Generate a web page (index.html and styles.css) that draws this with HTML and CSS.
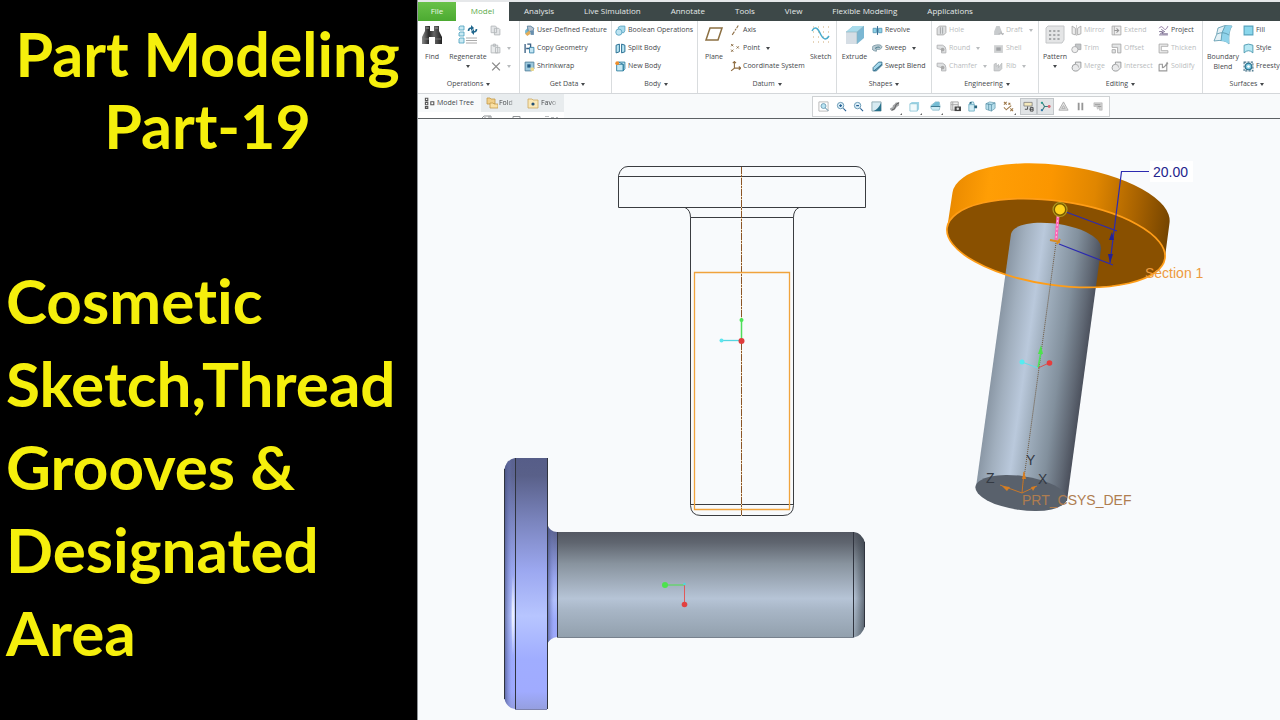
FILE: index.html
```
<!DOCTYPE html>
<html lang="en">
<head>
<meta charset="utf-8">
<title>Part Modeling Part-19</title>
<link rel="stylesheet" href="styles.css">
</head>
<body>
<svg class="defs" aria-hidden="true">
  <symbol id="copy" viewBox="0 0 10 10"><path d="M1 1h4l1 1v5H1zM4 3h4l1 1v5H4z" fill="#e4e6e8" stroke="#b4b8bb" stroke-width=".8"/></symbol>
  <symbol id="paste" viewBox="0 0 10 10"><path d="M1 2h6v7H1zM3 1h2v2H3zM5 4h4v5H5z" fill="#e9ebec" stroke="#b4b8bb" stroke-width=".8"/></symbol>
  <symbol id="cross" viewBox="0 0 10 10"><path d="M2 1.500l7 7M9 1.500l-7 7" stroke="#888" stroke-width="1.200"/></symbol>
  <symbol id="udf" viewBox="0 0 10 10"><path d="M1 5l2-2h3v5H1z" fill="#77b9d2"/><path d="M3 1h3l3 2-1 3H4z" fill="#b7c3d0" stroke="#4a7796" stroke-width=".7"/><path d="M1 8l4-3 1 3-3 2z" fill="#e3ad59"/><path d="M6 5h3v4H6z" fill="#688fae"/></symbol>
  <symbol id="geom" viewBox="0 0 10 10"><path d="M1 1v8M3 1h3v4H2" fill="none" stroke="#385e82" stroke-width="1.200"/><path d="M5 4h4v5H5z" fill="#c3e5f3" stroke="#3984a8" stroke-width=".8"/></symbol>
  <symbol id="shrink" viewBox="0 0 10 10"><path d="M1 1h8v6L7 9H1z" fill="#9cc8dc" stroke="#537f9a" stroke-width=".8"/><path d="M3 3h3v3H3z" fill="#245b83"/><path d="M6 6h3v3H6z" fill="#efd98a"/></symbol>
  <symbol id="boolean" viewBox="0 0 10 10"><path d="M3 2l2-1h4v4L8 7H3z" fill="#a9dbed" stroke="#5aa4c2" stroke-width=".8"/><circle cx="3.500" cy="6.500" r="2.800" fill="#bde4f2" stroke="#5aa4c2" stroke-width=".8"/></symbol>
  <symbol id="split" viewBox="0 0 10 10"><path d="M1 2l3-1v7l-3 1zM6 1l3 1v6l-3 1z" fill="#b9e6f3" stroke="#286e92" stroke-width=".9"/></symbol>
  <symbol id="newbody" viewBox="0 0 10 10"><path d="M1.500 3h6v6h-6zM3 1h6v6L7.500 9V3z" fill="#c5e9f4" stroke="#2c7c9e" stroke-width=".8"/><circle cx="2" cy="2" r="1.700" fill="#ef8e2b"/></symbol>
  <symbol id="axis" viewBox="0 0 10 10"><path d="M2 9l2-3M4.500 5l1-1.500M6 3l1.500-2.500" stroke="#8f7048" stroke-width="1"/></symbol>
  <symbol id="point" viewBox="0 0 10 10"><path d="M1 1l2 2M3 1L1 3M6 3l2 2M8 3L6 5M1 6l2 2M3 6L1 8" stroke="#8f7048" stroke-width=".9"/></symbol>
  <symbol id="csys" viewBox="0 0 10 10"><path d="M4 .500v6L1 9M4 6.500h6M2.500 2L4 .500 5.500 2M8 5l2 1.500L8 8" fill="none" stroke="#8f6d42" stroke-width="1"/></symbol>
  <symbol id="revolve" viewBox="0 0 10 10"><path d="M1 3h3v4H1zM6 3h3v4H6z" fill="#8ed1e7" stroke="#5a9bb8" stroke-width=".8"/><path d="M5 1v8" stroke="#386e94"/></symbol>
  <symbol id="sweep" viewBox="0 0 10 10"><path d="M0 4.500c0-3 9-4 9-1 0 2-3 3-5 2v2C1 7 0 6 0 4.500z" fill="#b9cbd3" stroke="#7d9aa6" stroke-width=".8"/><path d="M3 5c2-2 4-1 4-1" fill="none" stroke="#4b7b8c"/></symbol>
  <symbol id="blend" viewBox="0 0 10 10"><path d="M1 6L6 1h3v3L4 9H1z" fill="#a4d9ed" stroke="#326b87" stroke-width=".8"/><path d="M2 9L9 3" stroke="#326b87"/></symbol>
  <symbol id="hole" viewBox="0 0 10 10"><path d="M1 3l2-2h6v6L7 9H1z" fill="#dfe1e2" stroke="#aaa" stroke-width=".8"/><path d="M4 2v6M6 2v6" stroke="#a8abad"/></symbol>
  <symbol id="round" viewBox="0 0 10 10"><path d="M1 2h5q3 1 3 4v3H5V6L1 5z" fill="#dfe1e2" stroke="#b0b2b4" stroke-width=".8"/><circle cx="6" cy="6" r="1.700" fill="#aaa"/></symbol>
  <symbol id="shell" viewBox="0 0 10 10"><path d="M1 2h8v7H1z" fill="#cfd1d2"/><path d="M3 4h4v3H3z" fill="#9fa2a5"/></symbol>
  <symbol id="draft" viewBox="0 0 10 10"><path d="M3 1h3l2 5-2 3H1V6z" fill="#c8cbcd"/><path d="M5 8h5M7 6l2 3" stroke="#b5b7b9"/></symbol>
  <symbol id="rib" viewBox="0 0 10 10"><path d="M1 3l2-1v3l2-2v3l3-4v5L6 9H1z" fill="#d0d2d4" stroke="#b5b7b9" stroke-width=".7"/></symbol>
  <symbol id="mirror" viewBox="0 0 10 10"><path d="M1 1l3 2v6L1 8zM9 1L6 3v6l3-1z" fill="#eee" stroke="#aaa" stroke-width=".8"/><path d="M5 0v10" stroke="#bbb" stroke-width=".6"/></symbol>
  <symbol id="trim" viewBox="0 0 10 10"><path d="M4 1h5v5H4z" fill="#c2c5c7" stroke="#a7a9ab" stroke-width=".8"/><circle cx="3.500" cy="6" r="2.800" fill="#eee" stroke="#a7a9ab" stroke-width=".8"/></symbol>
  <symbol id="merge" viewBox="0 0 10 10"><path d="M4 1h5v5L6 9q-5 1-5-3 0-3 3-3z" fill="#e9eaeb" stroke="#8f9294" stroke-width=".8"/><path d="M4 3q3 0 3 3" fill="none" stroke="#aaa" stroke-width=".8"/></symbol>
  <symbol id="extend" viewBox="0 0 10 10"><path d="M1 1h8v8H1zM3 1v8" fill="#eee" stroke="#aaa" stroke-width=".8"/><path d="M3 5h4M5 3l2 2-2 2" fill="none" stroke="#999"/></symbol>
  <symbol id="offset" viewBox="0 0 10 10"><path d="M1 1h8v8H6V4H1zM1 6h3v3H1z" fill="#e4e6e7" stroke="#aaa" stroke-width=".8"/></symbol>
  <symbol id="project" viewBox="0 0 10 10"><path d="M1 3q2-3 4 0t4-2" fill="none" stroke="#8a719b" stroke-width=".8"/><path d="M1 6h3v2h5M1 9h8M3 4l3 2-4 2" fill="none" stroke="#72648a" stroke-width=".8"/></symbol>
  <symbol id="thicken" viewBox="0 0 10 10"><path d="M9 1H1v8h8V7H3V3h6z" fill="#eee" stroke="#aaa" stroke-width=".8"/></symbol>
  <symbol id="solidify" viewBox="0 0 10 10"><path d="M1 3h3v3q2 0 4-4M1 3v6h7V2M8 1l1 2" fill="none" stroke="#999" stroke-width="1"/></symbol>
  <symbol id="fill" viewBox="0 0 10 10"><path d="M1 1h8v8H1z" fill="#8ad7ec" stroke="#55a3bd"/></symbol>
  <symbol id="style" viewBox="0 0 10 10"><path d="M1 2q4-2 8 0v7Q5 5 1 9z" fill="#b6e8f4" stroke="#4a96ad" stroke-width=".8"/></symbol>
  <symbol id="free" viewBox="0 0 10 10"><path d="M1 1h8v8H1z" fill="none" stroke="#467288" stroke-dasharray="2 1"/><circle cx="5" cy="5" r="3" fill="#7cc6dd" stroke="#27708c"/><circle cx="5" cy="5" r="1.200" fill="#fff"/></symbol>
  <symbol id="binoc" viewBox="0 0 20 20"><path d="M3 1h5v5h4V1h5v5l3 6v7h-7v-7H7v7H0v-7l3-6z" fill="url(#metal)"/><path d="M1 14h6M13 14h6" stroke="#777"/><path d="M4 3h3M13 3h3" stroke="#999"/></symbol>
  <symbol id="regen" viewBox="0 0 20 20"><path d="M1 2l1-1h4v4H1zM1 8l1-1h4v4H1zM1 14l1-1h4v5H1z" fill="#c9e9f3" stroke="#4aa0bd" stroke-width=".8"/><path d="M10.500 6q0-3 3-3" fill="none" stroke="#20678d" stroke-width="1.600"/><path d="M13 0v6l3-3z" fill="#20678d"/><path d="M18.500 4q0 3-3 3" fill="none" stroke="#20678d" stroke-width="1.600"/><path d="M16 4v6l-3-3z" fill="#20678d"/><path d="M8 13h11M8 15.500h11M8 18h11" stroke="#aaa"/></symbol>
  <symbol id="plane" viewBox="0 0 20 20"><path d="M6 3h12l-4 12H2z" fill="none" stroke="#8c7043" stroke-width="1.500"/></symbol>
  <symbol id="sketch" viewBox="0 0 20 20"><path d="M2 2h17M2 7h17M2 12h17M2 17h17" stroke="#cda975" stroke-dasharray="1 4"/><path d="M1 6c4-7 7 0 9 4s5 6 8 1" fill="none" stroke="#4aaccc" stroke-width="1.500"/></symbol>
  <symbol id="extrude" viewBox="0 0 20 20"><path d="M1 7l7-6h11v12l-7 6H1z" fill="#7bb7d3"/><path d="M1 7h11v12H1z" fill="#d6dee5"/><path d="M1 7l7-6h11l-7 6z" fill="#a9dcec"/><path d="M12 7l7-6M12 7v12M1 7h11" stroke="#8caebb" fill="none" stroke-width=".6"/></symbol>
  <symbol id="pattern" viewBox="0 0 20 20"><path d="M1 3l2-2h16v14l-2 3H1z" fill="#e4e5e6" stroke="#c4c6c8"/><path d="M4 6h12M4 10h12M4 14h12" stroke="#a6a8aa" stroke-width="2.200" stroke-dasharray="2.200 2"/></symbol>
  <symbol id="surface" viewBox="0 0 20 20"><path d="M5 3Q12-1 19 1 15 6 16 19q-4-5-15-3Q4 10 5 3z" fill="#e3f0f5" stroke="#5795ab" stroke-width=".8"/><path d="M12 1q4-1 7 0-4 5-3 18-3-3-8-3Q8 7 12 1z" fill="#8fd3ea"/><path d="M12 1Q8 7 8 16M4 9q6-3 12 1" fill="none" stroke="#5795ab" stroke-width=".8"/></symbol>
  <symbol id="tree" viewBox="0 0 10 10"><path d="M2 1h2v2H2zM2 4.500h2v2H2zM2 8h2v1.500H2zM6.500 4h2.500v2.500H6.500z" fill="#fff" stroke="#555" stroke-width=".9"/></symbol>
  <symbol id="folders" viewBox="0 0 12 12"><path d="M1 1h3l1 1h4v5H1z" fill="#f2d089" stroke="#c39a4a" stroke-width=".8"/><path d="M4 6h3l1 1h4v4H4z" fill="#fae1a5" stroke="#c39a4a" stroke-width=".8"/></symbol>
  <symbol id="fav" viewBox="0 0 12 12"><path d="M1 2h4l1 1h5v8H1z" fill="#fae8b8" stroke="#cba860" stroke-width=".8"/><circle cx="6" cy="7" r="1.600" fill="#234f73"/></symbol>
  <symbol id="refit" viewBox="0 0 12 12"><path d="M1 1h10v10H1z" fill="none" stroke="#b6b6b6"/><circle cx="6" cy="5.500" r="2.700" fill="#b9e4f3" stroke="#6f9db4"/><path d="M8 7.500l3 3" stroke="#3d7d9d"/></symbol>
  <symbol id="zin" viewBox="0 0 12 12"><circle cx="5" cy="5" r="3.500" fill="#def0f8" stroke="#5f93b0"/><path d="M8 8l3 3M3.500 5h3M5 3.500v3" stroke="#265f93" stroke-width="1.200"/></symbol>
  <symbol id="zout" viewBox="0 0 12 12"><circle cx="5" cy="5" r="3.500" fill="#def0f8" stroke="#5f93b0"/><path d="M8 8l3 3M3.500 5h3" stroke="#265f93" stroke-width="1.200"/></symbol>
  <symbol id="repaint" viewBox="0 0 12 12"><path d="M1 1h10v10H1z" fill="#d6eaf1" stroke="#8fa8b2"/><path d="M11 2v9H3q5-2 8-9z" fill="#28728c"/></symbol>
  <symbol id="render" viewBox="0 0 12 12"><path d="M1 9c0-2 3-1 3-3S7 4 7 2l4-1v4Q9 6 8 7q-1 3-5 4z" fill="#a3a5a7"/><path d="M3 10q4-1 4-4t4-4" stroke="#555" fill="none"/></symbol>
  <symbol id="cube" viewBox="0 0 12 12"><path d="M1 3l2-2h8v8l-2 2H1z" fill="#9ed4e5"/><path d="M1 3h8v8H1z" fill="#f1fafc" stroke="#7fbfd2" stroke-width=".8"/></symbol>
  <symbol id="orient" viewBox="0 0 12 12"><path d="M1 5l5-4h4l1 5-1 4H3L1 8z" fill="#cdebf4" stroke="#7fb4c6" stroke-width=".8"/><path d="M6 1h4v5H1l5-5z" fill="#74bcd4"/><path d="M1 6h10" stroke="#35728a"/></symbol>
  <symbol id="cam" viewBox="0 0 12 12"><path d="M1 1h8v9H1zM3 1v9M1 4h8" fill="#f0f0f0" stroke="#a5a5a5"/><path d="M5 6h7v5H5z" fill="#444"/><circle cx="8.500" cy="8.500" r="1.400" fill="#ddd"/></symbol>
  <symbol id="box" viewBox="0 0 12 12"><path d="M2 4h6v7H2zM2 4l2-3h3l1 3" fill="#d3edf5" stroke="#5ba3bb" stroke-width=".8"/><path d="M8 5h3v3H8zM3 1h2v2H3z" fill="#27637c"/></symbol>
  <symbol id="section" viewBox="0 0 12 12"><path d="M1 3l4-2 6 1v6l-4 3-6-2z" fill="#b7dfec" stroke="#6b9fb2" stroke-width=".8"/><path d="M1 3l6 1v7M7 4l4-2M4 3v7" fill="none" stroke="#427f97" stroke-width=".7"/></symbol>
  <symbol id="datums" viewBox="0 0 12 12"><path d="M1 1l3 3M4 1L1 4M6 2l2 2M8 2L6 4M3 10l6-5M8 8l3 3M11 8l-3 3M1 7l2 2" stroke="#9b7545" stroke-width="1.100"/></symbol>
  <symbol id="note" viewBox="0 0 12 12"><path d="M1 1.500h9v4H1z" fill="#f4e9bc" stroke="#777" stroke-width=".8"/><path d="M2 9h3V6M8 7h3v4H8zM7 9h4" fill="none" stroke="#444"/></symbol>
  <symbol id="spin" viewBox="0 0 12 12"><path d="M2 1l3 5h6M5 6l-3 5" fill="none" stroke="#397d7c" stroke-width="1.200"/><circle cx="10" cy="6" r="1.600" fill="#da6570"/><circle cx="2" cy="2" r="1.200" fill="#299d90"/><circle cx="2" cy="10" r="1.200" fill="#3479aa"/></symbol>
  <symbol id="warn" viewBox="0 0 12 12"><path d="M6 1L1 10h10zM6 5l-2 3h4z" fill="#e4e4e4" stroke="#aaa"/></symbol>
  <symbol id="pause" viewBox="0 0 12 12"><path d="M3 2h2v8H3zM7 2h2v8H7z" fill="#969696"/></symbol>
  <symbol id="play" viewBox="0 0 12 12"><path d="M1 2h9v8H7V7L5 9 4 6H1z" fill="#d0d0d0" stroke="#b5b5b5" stroke-width=".7"/><path d="M2 4h6M5 6h4" stroke="#999"/></symbol>
  <linearGradient id="metal"><stop stop-color="#8b8b8b"/><stop offset=".35" stop-color="#292929"/><stop offset=".6" stop-color="#666"/><stop offset="1" stop-color="#202020"/></linearGradient>
</svg>
<div class="layout">
  <aside class="cover">
    <h1 class="cover-title">Part Modeling<br>Part-19</h1>
    <p class="cover-topics">Cosmetic Sketch,Thread Grooves &amp; Designated Area</p>
  </aside>
  <main class="app">
    <nav class="tabs" aria-label="Ribbon tabs">
      <button class="tab tab-file">File</button><button class="tab tab-active">Model</button><button class="tab">Analysis</button><button class="tab">Live Simulation</button><button class="tab">Annotate</button><button class="tab">Tools</button><button class="tab">View</button><button class="tab">Flexible Modeling</button><button class="tab">Applications</button>
    </nav>
    <div class="ribbon">
      <section class="group g-ops">
        <div class="tools">
          <button class="big w-find"><svg><use href="#binoc"/></svg>Find</button>
          <button class="big w-regen"><svg><use href="#regen"/></svg>Regenerate<i class="caret"></i></button>
          <div class="col"><button class="cmd off" aria-label="Copy"><svg><use href="#copy"/></svg></button><button class="cmd off" aria-label="Paste"><svg><use href="#paste"/></svg><i class="caret"></i></button><button class="cmd off" aria-label="Delete"><svg><use href="#cross"/></svg><i class="caret"></i></button></div>
        </div>
        <button class="group-name">Operations<i class="caret"></i></button>
      </section>
      <section class="group g-data">
        <div class="tools"><div class="col"><button class="cmd"><svg><use href="#udf"/></svg>User-Defined Feature</button><button class="cmd"><svg><use href="#geom"/></svg>Copy Geometry</button><button class="cmd"><svg><use href="#shrink"/></svg>Shrinkwrap</button></div></div>
        <button class="group-name">Get Data<i class="caret"></i></button>
      </section>
      <section class="group g-body">
        <div class="tools"><div class="col"><button class="cmd"><svg><use href="#boolean"/></svg>Boolean Operations</button><button class="cmd"><svg><use href="#split"/></svg>Split Body</button><button class="cmd"><svg><use href="#newbody"/></svg>New Body</button></div></div>
        <button class="group-name">Body<i class="caret"></i></button>
      </section>
      <section class="group g-datum">
        <div class="tools">
          <button class="big w-mid"><svg><use href="#plane"/></svg>Plane</button>
          <div class="col grow"><button class="cmd"><svg><use href="#axis"/></svg>Axis</button><button class="cmd"><svg><use href="#point"/></svg>Point<i class="caret"></i></button><button class="cmd"><svg><use href="#csys"/></svg>Coordinate System</button></div>
          <button class="big w-mid"><svg><use href="#sketch"/></svg>Sketch</button>
        </div>
        <button class="group-name">Datum<i class="caret"></i></button>
      </section>
      <section class="group g-shapes">
        <div class="tools">
          <button class="big w-wide"><svg><use href="#extrude"/></svg>Extrude</button>
          <div class="col"><button class="cmd"><svg><use href="#revolve"/></svg>Revolve</button><button class="cmd"><svg><use href="#sweep"/></svg>Sweep<i class="caret"></i></button><button class="cmd"><svg><use href="#blend"/></svg>Swept Blend</button></div>
        </div>
        <button class="group-name">Shapes<i class="caret"></i></button>
      </section>
      <section class="group g-eng">
        <div class="tools">
          <div class="col c-eng"><button class="cmd off"><svg><use href="#hole"/></svg>Hole</button><button class="cmd off"><svg><use href="#round"/></svg>Round<i class="caret"></i></button><button class="cmd off"><svg><use href="#round"/></svg>Chamfer<i class="caret"></i></button></div>
          <div class="col"><button class="cmd off"><svg><use href="#draft"/></svg>Draft<i class="caret"></i></button><button class="cmd off"><svg><use href="#shell"/></svg>Shell</button><button class="cmd off"><svg><use href="#rib"/></svg>Rib<i class="caret"></i></button></div>
        </div>
        <button class="group-name">Engineering<i class="caret"></i></button>
      </section>
      <section class="group g-edit">
        <div class="tools">
          <button class="big w-mid"><svg><use href="#pattern"/></svg>Pattern<i class="caret"></i></button>
          <div class="col c-edit"><button class="cmd off"><svg><use href="#mirror"/></svg>Mirror</button><button class="cmd off"><svg><use href="#trim"/></svg>Trim</button><button class="cmd off"><svg><use href="#merge"/></svg>Merge</button></div>
          <div class="col c-extend"><button class="cmd off"><svg><use href="#extend"/></svg>Extend</button><button class="cmd off"><svg><use href="#offset"/></svg>Offset</button><button class="cmd off"><svg><use href="#merge"/></svg>Intersect</button></div>
          <div class="col"><button class="cmd"><svg><use href="#project"/></svg>Project</button><button class="cmd off"><svg><use href="#thicken"/></svg>Thicken</button><button class="cmd off"><svg><use href="#solidify"/></svg>Solidify</button></div>
        </div>
        <button class="group-name">Editing<i class="caret"></i></button>
      </section>
      <section class="group g-surf">
        <div class="tools">
          <button class="big w-surf"><svg><use href="#surface"/></svg>Boundary<br>Blend</button>
          <div class="col"><button class="cmd"><svg><use href="#fill"/></svg>Fill</button><button class="cmd"><svg><use href="#style"/></svg>Style</button><button class="cmd"><svg><use href="#free"/></svg>Freesty</button></div>
        </div>
        <button class="group-name">Surfaces<i class="caret"></i></button>
      </section>
    </div>
    <div class="subbar">
      <div class="navigator">
        <div class="panes">
          <button class="pane pane-active"><svg><use href="#tree"/></svg>Model Tree</button><button class="pane pane-fold"><svg><use href="#folders"/></svg><span class="fade">Fold</span></button><button class="pane pane-fav"><svg><use href="#fav"/></svg><span class="fade">Favo</span></button>
        </div>
        <svg class="pane-tools" viewBox="0 0 146 6" aria-hidden="true"><path d="M64 6l2-2h7v2M67 6V5M71 6V4M95 6V4.500h7V6" fill="none" stroke="#8f9396"/><path d="M127 4.500h4M133 5.500h3M138 5.500h2" stroke="#b9bcbe"/></svg>
      </div>
      <div class="viewbar" role="toolbar" aria-label="Graphics">
        <button class="vb" aria-label="Refit"><svg><use href="#refit"/></svg></button><button class="vb" aria-label="Zoom in"><svg><use href="#zin"/></svg></button><button class="vb" aria-label="Zoom out"><svg><use href="#zout"/></svg></button><button class="vb" aria-label="Repaint"><svg><use href="#repaint"/></svg></button><button class="vb more" aria-label="Rendering"><svg><use href="#render"/></svg></button><button class="vb more" aria-label="Display style"><svg><use href="#cube"/></svg></button><button class="vb more" aria-label="Orientations"><svg><use href="#orient"/></svg></button><button class="vb" aria-label="Saved views"><svg><use href="#cam"/></svg></button><button class="vb" aria-label="View normal"><svg><use href="#box"/></svg></button><button class="vb" aria-label="Section"><svg><use href="#section"/></svg></button><button class="vb more" aria-label="Datum display"><svg><use href="#datums"/></svg></button><button class="vb on" aria-label="Annotations"><svg><use href="#note"/></svg></button><button class="vb on" aria-label="Spin center"><svg><use href="#spin"/></svg></button><button class="vb" aria-label="Simulate"><svg><use href="#warn"/></svg></button><button class="vb" aria-label="Pause"><svg><use href="#pause"/></svg></button><button class="vb" aria-label="Resume"><svg><use href="#play"/></svg></button>
      </div>
    </div>
    <svg class="viewport" viewBox="418 119 862 601" preserveAspectRatio="xMinYMin meet" role="img" aria-label="Headed pin in three views">
      <defs>
        <linearGradient id="pinSide" x2="0" y2="1"><stop stop-color="#545863"/><stop offset=".1" stop-color="#5f656f"/><stop offset=".3" stop-color="#88939e"/><stop offset=".63" stop-color="#b6c4d6"/><stop offset=".75" stop-color="#a7b5c5"/><stop offset="1" stop-color="#92a0ad"/></linearGradient>
        <linearGradient id="headSide" x2="0" y2="1"><stop stop-color="#565d88"/><stop offset=".07" stop-color="#596089"/><stop offset=".25" stop-color="#7a84bd"/><stop offset=".45" stop-color="#9ca8f0"/><stop offset=".63" stop-color="#b7c5ff"/><stop offset=".8" stop-color="#a0adff"/><stop offset=".93" stop-color="#a0abff"/><stop offset="1" stop-color="#959fe0"/></linearGradient>
        <linearGradient id="edgeL"><stop stop-color="#465080" stop-opacity=".75"/><stop offset=".7" stop-color="#8090e0" stop-opacity=".1"/></linearGradient>
        <linearGradient id="edgeR"><stop stop-color="#303842" stop-opacity="0"/><stop offset="1" stop-color="#303842" stop-opacity=".65"/></linearGradient>
        <radialGradient id="shine"><stop stop-color="#fff"/><stop offset="1" stop-color="#fff" stop-opacity="0"/></radialGradient>
        <linearGradient id="shank" gradientUnits="userSpaceOnUse" x1="993" y1="360" x2="1085" y2="373"><stop stop-color="#8996a4"/><stop offset=".15" stop-color="#a1afbe"/><stop offset=".35" stop-color="#bac9dc"/><stop offset=".5" stop-color="#9faebd"/><stop offset=".72" stop-color="#82909d"/><stop offset=".9" stop-color="#606874"/><stop offset="1" stop-color="#4a4f5b"/></linearGradient>
        <linearGradient id="rim" gradientUnits="userSpaceOnUse" x1="947" y1="195" x2="1170" y2="225"><stop stop-color="#e88800"/><stop offset=".18" stop-color="#ff9e05"/><stop offset=".45" stop-color="#fb9600"/><stop offset=".65" stop-color="#e08600"/><stop offset=".85" stop-color="#a66100"/><stop offset="1" stop-color="#744400"/></linearGradient>
      </defs>

      <g fill="none" stroke="#3a3c40" stroke-width="1">
        <path d="M618.500 207.500V175.500Q621 166.500 628 166.500H856Q863 166.500 865.500 175.500V207.500zM618.500 176.500H865.500"/>
        <path d="M685 207.500Q690.500 210 690.500 217.500V505.500Q691 515.500 701 515.500H783Q793 515.500 793.500 505.500V217.500Q793.500 210 799 207.500M690.500 217.500H793.500M690.500 504.500H793.500"/>
        <path stroke="#f3d3a4" d="M741.500 167V516"/>
        <path stroke="#8a5526" stroke-dasharray="7 1 2 1" d="M741.500 167V516"/>
        <path stroke="#f0a33c" stroke-width="1.300" d="M694.500 272.500H789.500V509.500H694.500z"/>
        <path stroke="#4fdc5a" stroke-width="1.500" d="M741.500 340.500V320.500"/><path stroke="#55d6e0" stroke-width="1.300" d="M741.500 340.500H721.500"/>
      </g>
      <circle cx="741.500" cy="320" r="2" fill="#4be655"/><circle cx="721.500" cy="340.500" r="2" fill="#5de6ee"/><circle cx="741.500" cy="341" r="3" fill="#e03c3c"/>

      <path d="M547 524Q550 532 557 532V637Q550 638 547 644z" fill="url(#headSide)"/>
      <path d="M547 524Q550 532 557 532V637Q550 638 547 644z" fill="url(#edgeL)"/>
      <path d="M557 532H854Q862 533 865 543V626Q862 636 854 637.500H557z" fill="url(#pinSide)"/>
      <path d="M854 532Q862 533 865 543V626Q862 636 854 637.500z" fill="url(#edgeR)"/>
      <path d="M515 458H547.500V709H515Q507 708 504.500 699V469Q507 459 515 458z" fill="url(#headSide)"/>
      <path d="M515 458Q507 459 504.500 469V699Q507 708 515 709z" fill="url(#edgeL)"/>
      <ellipse cx="513" cy="615" rx="2" ry="42" fill="url(#shine)"/>
      <path d="M515.500 458V709M547.500 458V709M557.500 532V637M853.500 532V637M864.500 542V627M504.500 469V699" fill="none" stroke="#30343f" stroke-width="1"/>
      <path d="M515 709.500H547" stroke="#7d82ad"/><path d="M557 637.500H854" stroke="#77818d"/>
      <path d="M684 585H664" stroke="#4ce04c"/><circle cx="665" cy="585" r="3" fill="#4de24d"/><path d="M684.500 585V604" stroke="#e05a5a"/><circle cx="684.500" cy="604.500" r="2.800" fill="#e24040"/><circle cx="684.500" cy="584" r="1.300" fill="#50d8e0"/>

      <path d="M947 229L952.500 192.500A109 42 8 0 1 1169.500 223L1165 257z" fill="url(#rim)"/>
      <ellipse rx="110" ry="42" transform="translate(1056 243) rotate(8)" fill="#895000"/>
      <path d="M1011 234C1015 219 1060 220 1086 232Q1102 240 1101 249L1067 501 976 487z" fill="url(#shank)"/>
      <ellipse rx="46" ry="17" transform="translate(1021 493) rotate(8)" fill="#59616c"/>
      <ellipse rx="110" ry="42" transform="translate(1056 243) rotate(8)" fill="none" stroke="#ff9d17" stroke-width="1.700"/>
      <path d="M1056 243L1022 493" stroke="#6d573e" stroke-dasharray="1 1"/>
      <path d="M1058 216L1056 240" stroke="#ff64b5" stroke-width="3"/><path d="M1058 216L1056 240" stroke="#ffc2df" stroke-dasharray="2 2"/>
      <path d="M1050 240L1060 242M1057 244L1060 239" stroke="#d98b22" stroke-width="2"/>
      <g fill="none" stroke="#2c2ab0" stroke-width="1.200"><path d="M1149 171.500H1121.500L1110 263M1066 212L1117 231M1059 244L1113 265"/></g>
      <path d="M1112 232l-3 8h5zM1110 263l-2-9h5z" fill="#242294"/>
      <circle cx="1060" cy="209.500" r="7" fill="#785900" stroke="#b19b22" stroke-width="1.200"/><circle cx="1060" cy="209.500" r="5" fill="#ffd21b"/>
      <rect x="1150" y="161" width="43" height="21" fill="#fff"/>
      <g class="model-text"><text x="1153" y="177" fill="#24248d">20.00</text><text x="1145" y="278" fill="#ed9b3e">Section 1</text><text x="1022" y="505" fill="#af7d50">PRT_CSYS_DEF</text><text x="1026" y="465" fill="#343a43">Y</text><text x="1038" y="484" fill="#343a43">X</text><text x="986" y="483" fill="#343a43">Z</text></g>
      <path d="M1022 493L1024 472M1022 493L1000 485M1022 493L1037 486" stroke="#c7782a"/><path d="M1024 471l-2 8h4zM1002 486l8 1-3 4zM1036 486l-5 1 2 4z" fill="#d77e21"/>
      <path d="M1038 368L1041 352" stroke="#4ee25b" stroke-width="1.500"/><path d="M1041 345l-3 9h5z" fill="#4de24d"/><path d="M1038 368L1022 362" stroke="#63dfe8"/><circle cx="1022" cy="362" r="2.500" fill="#54ecf1"/><path d="M1038 368L1049 363" stroke="#d75252"/><circle cx="1049.500" cy="363" r="2.800" fill="#e63c3c"/>
    </svg>
  </main>
</div>
</body>
</html>
```
FILE: styles.css
```
* { box-sizing: border-box; }
body { margin: 0; background: #f8fafc; }
.defs { position: absolute; width: 0; height: 0; }
button { margin: 0; padding: 0; border: 0; background: none; font: inherit; color: inherit; white-space: nowrap; }
.layout { display: flex; min-height: 100vh; }
.cover { flex: 0 0 417px; padding: 18px 0 0 6px; background: #000; color: #f5ef0c; font-family: Lato, "Liberation Sans", sans-serif; font-weight: 700; font-variant-ligatures: none; }
.cover-title { margin: 0 8px 97px 0; font-size: 61px; line-height: 72px; text-align: center; white-space: nowrap; }
.cover-topics { margin: 0; font-size: 62px; line-height: 83px; }
.app { flex: 1; min-width: 0; display: flex; flex-direction: column; overflow: hidden; border-left: 1px solid #8e9296; font-family: "Open Sans", "Noto Sans", sans-serif; font-size: 7px; line-height: 10px; color: #45484b; }

.tabs { display: flex; height: 21px; padding-top: 2px; background: linear-gradient(#e6e8ea 2px, #3d4848 2px); font-size: 8px; }
.tab { padding: 0 15px 2px; color: #e4e8e8; }
.tab-file { padding: 0 0 2px; width: 38px; background: linear-gradient(#68c148, #4caa31); color: #eaf8e4; }
.tab-active { padding: 0 0 2px; width: 53px; background: #fff; color: #5aaa49; }

.ribbon { display: flex; height: 73px; background: #fff; border-bottom: 1px solid #d4d7da; }
.group { flex: none; display: flex; flex-direction: column; border-right: 1px solid #d9dcde; }
.tools { display: flex; height: 54px; }
.g-ops { width: 102px; }
.g-data { width: 92px; padding-left: 4px; }
.g-body { width: 86px; padding-left: 3px; }
.g-datum { width: 139px; }
.g-shapes { width: 95px; }
.g-eng { width: 107px; padding-left: 4px; }
.g-edit { width: 164px; }
.g-surf { flex: 1 0 88px; border-right: 0; }
.col { display: flex; flex-direction: column; }
.grow { flex: 1; }
.c-eng { width: 57px; }
.c-edit { width: 40px; }
.c-extend { width: 47px; }
.cmd { display: flex; align-items: center; gap: 2px; height: 18px; }
.cmd svg { flex: none; width: 11px; height: 11px; }
.cmd .caret { margin-left: 4px; }
.off { color: #b9bcbe; }
.big { flex: none; display: flex; flex-direction: column; align-items: center; padding-top: 4px; text-align: center; }
.big svg { width: 20px; height: 20px; margin-bottom: 7px; }
.big .caret { margin-top: 3px; }
.w-find { width: 28px; }
.w-regen { width: 44px; }
.w-mid { width: 32px; }
.w-wide { width: 35px; }
.w-surf { width: 40px; }
.caret { width: 0; height: 0; border: 2px solid transparent; border-top: 3px solid; border-bottom: 0; }
.group-name { display: flex; align-items: center; justify-content: center; gap: 3px; height: 18px; }

.subbar { display: flex; justify-content: space-between; height: 25px; border-bottom: 1px solid #5d6164; background: #f8fafb; }
.panes { display: flex; height: 18px; }
.pane { display: flex; align-items: center; gap: 2px; overflow: hidden; background: #e8ecee; }
.pane svg { flex: none; width: 12px; height: 12px; }
.pane-active { width: 63px; padding-left: 5px; background: #f8fafb; }
.pane-fold { width: 42px; padding-left: 5px; gap: 1px; }
.pane-fav { width: 41px; padding-left: 4px; }
.fade { -webkit-mask-image: linear-gradient(90deg, #000 60%, rgba(0, 0, 0, .3)); mask-image: linear-gradient(90deg, #000 60%, rgba(0, 0, 0, .3)); }
.pane-tools { display: block; width: 146px; height: 6px; background: #fff; }
.viewbar { display: flex; align-items: center; justify-content: space-between; width: 298px; height: 21px; margin: 2px 170px 0 0; padding: 0 2px; border: 1px solid #cfd2d4; background: #fff; }
.vb { display: flex; align-items: center; justify-content: center; width: 17px; height: 17px; }
.vb svg { flex: none; width: 11px; height: 11px; }
.more { width: 20px; }
.more::after { content: ""; align-self: flex-end; border-left: 2px solid transparent; border-bottom: 2px solid #666; }
.on { background: #e1e4e6; border: 1px solid #c3c7ca; }
.viewport { display: block; width: 100%; height: auto; }
.model-text { font-family: "Liberation Sans", Arial, sans-serif; font-size: 14px; }
```
